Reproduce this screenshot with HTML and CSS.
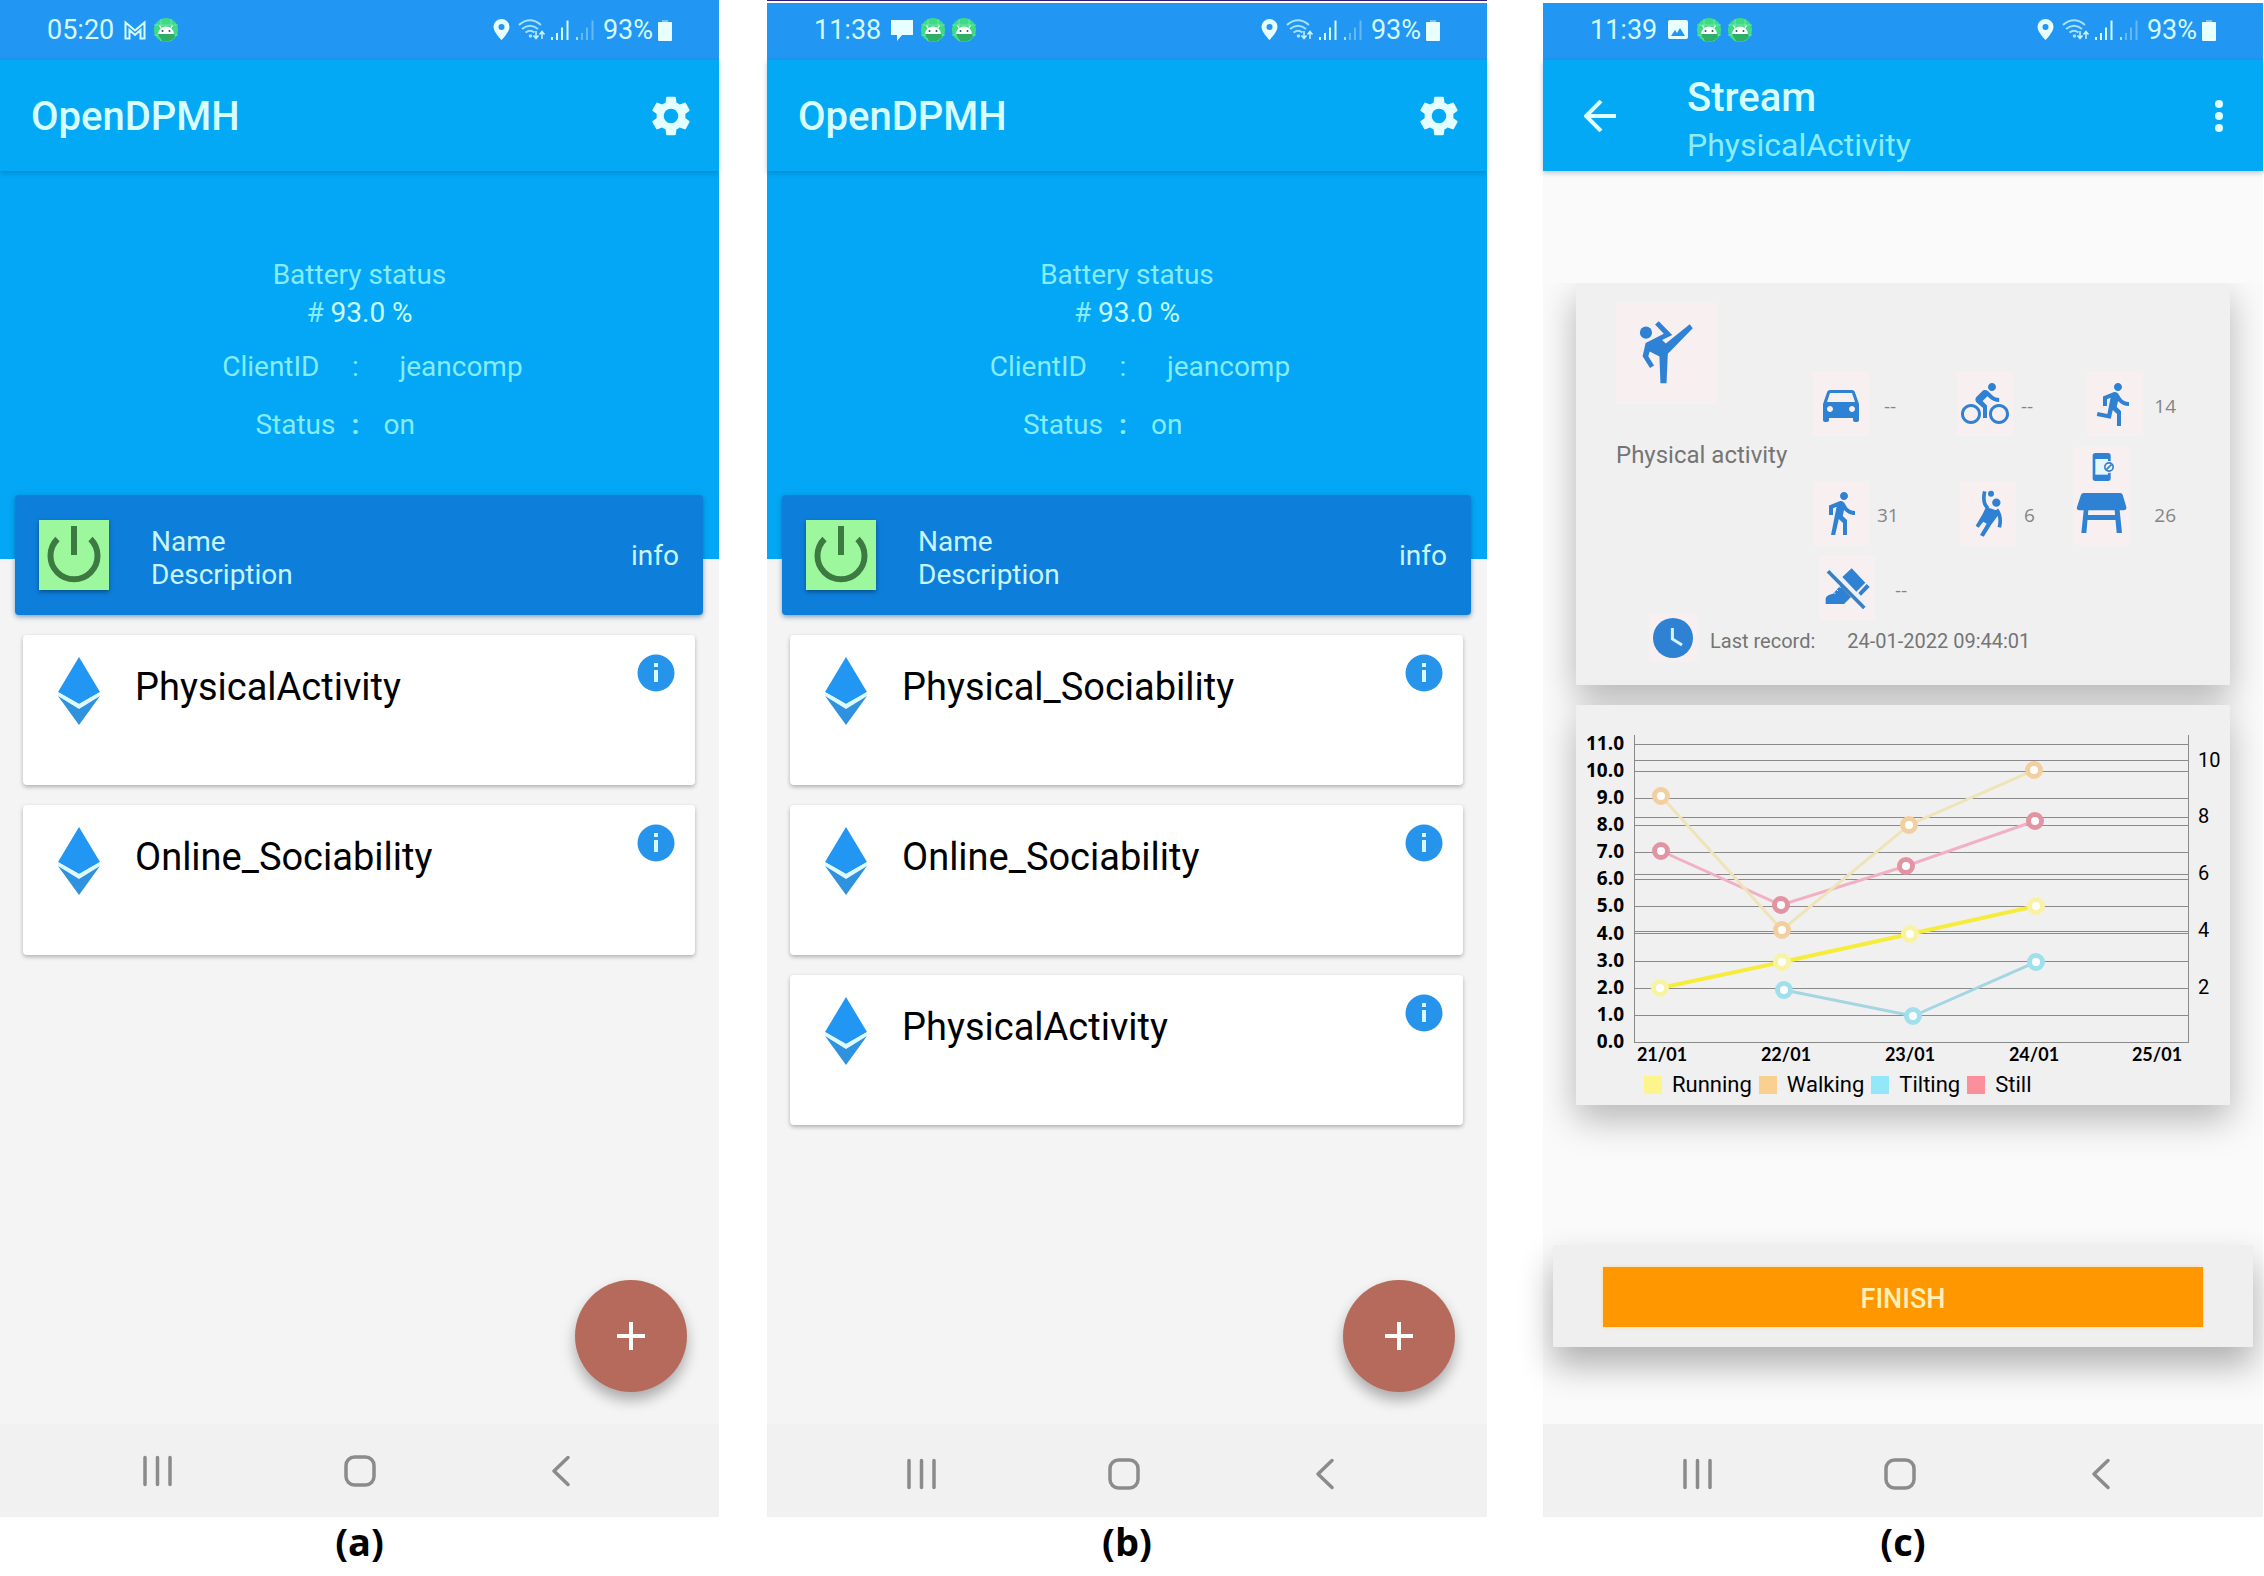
FILE: index.html
```html
<!DOCTYPE html>
<html lang="en">
<head>
<meta charset="utf-8">
<title>OpenDPMH</title>
<link rel="stylesheet" href="styles.css">
</head>
<body>
<svg class="sprite" aria-hidden="true">
  <symbol id="i-android" viewBox="0 0 24 24">
    <circle cx="12" cy="12" r="12" fill="#3ddc84"/>
    <path d="M0 7h24M0 17h24M7 1v22M17 1v22" stroke="#8aeab5" stroke-width=".7"/>
    <path d="M4 16l4 7q8 2 13-4l-1-4z" fill="#2fae68"/>
    <path d="M4 16a8 7.500 0 0 1 16 0z" fill="#fff"/>
    <path d="M7 10L5.500 7.500M17 10l1.500-2.500" stroke="#fff" stroke-width="1.200"/>
    <circle cx="8.500" cy="13" r="1" fill="#2a5a44"/><circle cx="15.500" cy="13" r="1" fill="#2a5a44"/>
  </symbol>
  <symbol id="i-signals" viewBox="0 0 102 22">
    <path fill="#e8ffff" fill-rule="evenodd" d="M8.500 0A8 8 0 0 0 .5 8c0 5 8 13 8 13s8-8 8-13a8 8 0 0 0-8-8zm0 5a3 3 0 1 1 0 6 3 3 0 0 1 0-6z"/>
    <g fill="none" stroke="#a8e2fa" stroke-width="2">
      <path d="M26 6q11-9.500 22 0M29 10q8-6.500 16 0M32.500 13.500q4.500-3.500 9 0"/>
      <path d="M43 12v7M40.500 16.500l2.500 3 2.500-3M49 20v-7M46.500 15.500l2.500-3 2.500 3" stroke="#c8f4ff" stroke-width="1.500"/>
    </g>
    <circle cx="37.500" cy="17" r="1.800" fill="#a8e2fa"/>
    <path d="M59 18v3M64 14v7M69 8.500V21M74.500 1.500V21" stroke="#d5ffff" stroke-width="2" fill="none"/>
    <path d="M84 18v3" stroke="#a8e2fa" stroke-width="2"/>
    <path d="M89 14v7M94 8.500V21M99.500 1.500V21" stroke="#65b9f7" stroke-width="2" fill="none"/>
  </symbol>
  <symbol id="i-battery" viewBox="0 0 14 21">
    <path d="M4 0h6v3H4z" fill="#7cc4f5"/><rect y="2" width="14" height="19" rx="1" fill="#e8ffff"/>
  </symbol>
  <symbol id="i-gear" viewBox="0 0 24 24"><path d="M19.140 12.940c.04-.3.06-.61.06-.94 0-.32-.02-.64-.07-.94l2.030-1.580c.18-.14.23-.41.12-.61l-1.920-3.320c-.12-.22-.37-.29-.59-.22l-2.390.96c-.5-.38-1.030-.7-1.620-.94l-.36-2.540c-.04-.24-.24-.41-.48-.41h-3.840c-.24 0-.43.17-.47.41l-.36 2.540c-.59.24-1.130.57-1.620.94l-2.390-.96c-.22-.08-.47 0-.59.22L2.740 8.870c-.12.21-.08.47.12.61l2.030 1.580c-.05.3-.09.63-.09.94s.02.64.07.94l-2.030 1.580c-.18.14-.23.41-.12.61l1.920 3.320c.12.22.37.29.59.22l2.390-.96c.5.38 1.030.7 1.620.94l.36 2.540c.05.24.24.41.48.41h3.840c.24 0 .44-.17.47-.41l.36-2.540c.59-.24 1.130-.56 1.620-.94l2.390.96c.22.08.47 0 .59-.22l1.920-3.320c.12-.22.07-.47-.12-.61l-2.010-1.580zM12 15.600c-1.980 0-3.600-1.620-3.600-3.600s1.620-3.600 3.600-3.600 3.600 1.620 3.600 3.600-1.620 3.600-3.600 3.600z"/></symbol>
  <symbol id="i-power" viewBox="0 0 70 70">
    <path d="M35 6v29M18.500 19a23.500 23.500 0 1 0 33 0" fill="none" stroke="#3c7a42" stroke-width="6"/>
  </symbol>
  <symbol id="i-stream" viewBox="0 0 42 68">
    <path d="M21 0l21 35-21 12L0 35z" fill="#2196f3"/>
    <path d="M0 35l21 12 21-12v4L21 52 0 39z" fill="#dcfaff"/>
    <path d="M0 39l21 13 21-13-21 29z" fill="#2f92de"/>
  </symbol>
  <symbol id="i-info" viewBox="0 0 38 38">
    <circle cx="19" cy="19" r="18.500" fill="#2694ea"/>
    <path d="M17 9h4v4h-4zM17 16h4v12h-4z" fill="#d5fbff"/>
  </symbol>
  <symbol id="i-recents" viewBox="0 0 32 32"><path d="M3 2.500v27M15.500 2.500v27M28 2.500v27" fill="none" stroke="#8b8b8b" stroke-width="3.500" stroke-linecap="round"/></symbol>
  <symbol id="i-home" viewBox="0 0 32 32"><rect x="2" y="2" width="28" height="28" rx="8.500" fill="none" stroke="#8b8b8b" stroke-width="3.500"/></symbol>
  <symbol id="i-back" viewBox="0 0 32 32"><path d="M23 2.500L9 16l14 13.500" fill="none" stroke="#8b8b8b" stroke-width="3.500" stroke-linecap="round" stroke-linejoin="round"/></symbol>
</svg>

<main class="board">
  <figure class="shot">
    <section class="phone" aria-label="Streams, two entries">
      <div class="status">
        <div class="status-side"><span class="clock">05:20</span>
          <svg class="note" viewBox="0 0 24 24"><path d="M2.500 20.500v-16l9.500 8 9.500-8v16h-4v-8.500L12 17l-5.500-5v8.500z" fill="none" stroke="#d5ffff" stroke-width="2"/></svg>
          <svg class="note"><use href="#i-android"/></svg></div>
        <div class="status-side right"><svg class="signals"><use href="#i-signals"/></svg><span class="clock">93%</span><svg class="battery"><use href="#i-battery"/></svg></div>
      </div>
      <header class="appbar"><h1>OpenDPMH</h1><button class="icon-btn" aria-label="Settings"><svg class="gear"><use href="#i-gear"/></svg></button></header>
      <div class="hero">
        <p>Battery status</p>
        <p># <b>93.0 %</b></p>
        <div class="pair"><span>ClientID</span><i>:</i><span>jeancomp</span></div>
        <div class="pair narrow"><span>Status</span><i class="strong">:</i><span>on</span></div>
      </div>
      <div class="head-card">
        <button class="power" aria-label="Power"><svg><use href="#i-power"/></svg></button>
        <div class="head-text"><span>Name</span><span>Description</span></div>
        <span class="head-info">info</span>
      </div>
      <ul class="streams">
        <li><svg class="stream"><use href="#i-stream"/></svg><span>PhysicalActivity</span><button class="icon-btn" aria-label="Info"><svg class="info"><use href="#i-info"/></svg></button></li>
        <li><svg class="stream"><use href="#i-stream"/></svg><span>Online_Sociability</span><button class="icon-btn" aria-label="Info"><svg class="info"><use href="#i-info"/></svg></button></li>
      </ul>
      <button class="fab" aria-label="Add"><svg viewBox="0 0 28 28"><path d="M14 0v28M0 14h28" stroke="#fff" stroke-width="4"/></svg></button>
      <nav class="navbar"><button class="icon-btn" aria-label="Recents"><svg><use href="#i-recents"/></svg></button><button class="icon-btn" aria-label="Home"><svg><use href="#i-home"/></svg></button><button class="icon-btn" aria-label="Back"><svg><use href="#i-back"/></svg></button></nav>
    </section>
    <figcaption>(a)</figcaption>
  </figure>

  <figure class="shot inset lined">
    <section class="phone" aria-label="Streams, three entries">
      <div class="status">
        <div class="status-side"><span class="clock">11:38</span>
          <svg class="note" viewBox="0 0 24 24"><path d="M1 2h22v15H12l-5 6v-6H1z" fill="#e8ffff"/></svg>
          <svg class="note"><use href="#i-android"/></svg><svg class="note"><use href="#i-android"/></svg></div>
        <div class="status-side right"><svg class="signals"><use href="#i-signals"/></svg><span class="clock">93%</span><svg class="battery"><use href="#i-battery"/></svg></div>
      </div>
      <header class="appbar"><h1>OpenDPMH</h1><button class="icon-btn" aria-label="Settings"><svg class="gear"><use href="#i-gear"/></svg></button></header>
      <div class="hero">
        <p>Battery status</p>
        <p># <b>93.0 %</b></p>
        <div class="pair"><span>ClientID</span><i>:</i><span>jeancomp</span></div>
        <div class="pair narrow"><span>Status</span><i class="strong">:</i><span>on</span></div>
      </div>
      <div class="head-card">
        <button class="power" aria-label="Power"><svg><use href="#i-power"/></svg></button>
        <div class="head-text"><span>Name</span><span>Description</span></div>
        <span class="head-info">info</span>
      </div>
      <ul class="streams">
        <li><svg class="stream"><use href="#i-stream"/></svg><span>Physical_Sociability</span><button class="icon-btn" aria-label="Info"><svg class="info"><use href="#i-info"/></svg></button></li>
        <li><svg class="stream"><use href="#i-stream"/></svg><span>Online_Sociability</span><button class="icon-btn" aria-label="Info"><svg class="info"><use href="#i-info"/></svg></button></li>
        <li><svg class="stream"><use href="#i-stream"/></svg><span>PhysicalActivity</span><button class="icon-btn" aria-label="Info"><svg class="info"><use href="#i-info"/></svg></button></li>
      </ul>
      <button class="fab" aria-label="Add"><svg viewBox="0 0 28 28"><path d="M14 0v28M0 14h28" stroke="#fff" stroke-width="4"/></svg></button>
      <nav class="navbar"><button class="icon-btn" aria-label="Recents"><svg><use href="#i-recents"/></svg></button><button class="icon-btn" aria-label="Home"><svg><use href="#i-home"/></svg></button><button class="icon-btn" aria-label="Back"><svg><use href="#i-back"/></svg></button></nav>
    </section>
    <figcaption>(b)</figcaption>
  </figure>

  <figure class="shot inset">
    <section class="phone detail" aria-label="Stream detail">
      <div class="status">
        <div class="status-side"><span class="clock">11:39</span>
          <svg class="note" viewBox="0 0 24 24"><path fill="#e8ffff" fill-rule="evenodd" d="M4 2h16a2 2 0 0 1 2 2v15a2 2 0 0 1-2 2H4a2 2 0 0 1-2-2V4a2 2 0 0 1 2-2zm1 16h14l-5-8-3 5-2-3z"/></svg>
          <svg class="note"><use href="#i-android"/></svg><svg class="note"><use href="#i-android"/></svg></div>
        <div class="status-side right"><svg class="signals"><use href="#i-signals"/></svg><span class="clock">93%</span><svg class="battery"><use href="#i-battery"/></svg></div>
      </div>
      <header class="appbar">
        <button class="icon-btn" aria-label="Go back"><svg class="arrow" viewBox="0 0 32 32"><path d="M32 16H3M17 1L2 16l15 15" fill="none" stroke="#e0ffff" stroke-width="4"/></svg></button>
        <div class="titles"><h1>Stream</h1><span>PhysicalActivity</span></div>
        <button class="icon-btn" aria-label="More"><svg class="dots" viewBox="0 0 10 34" fill="#e0ffff"><circle cx="5" cy="5" r="4"/><circle cx="5" cy="17" r="4"/><circle cx="5" cy="29" r="4"/></svg></button>
      </header>
      <div class="cards">
        <article class="card activity">
          <div class="overview">
            <div class="kind">
              <svg class="kick tint" viewBox="18 24 300 300"><circle cx="107" cy="112" r="18"/><path d="M134 88l11-10 40 41-30 15 11 10 71-57 9 12-74 76-4 87h-18l-3-79-29-15-4 14 17 28-12 7-22-35 9-39 54-28z"/></svg>
              <span>Physical activity</span>
            </div>
            <div class="metrics">
              <div class="metric wide"><svg class="tint" viewBox="-2 -4 28 32"><path d="M18.920 6.010C18.720 5.420 18.160 5 17.500 5h-11c-.66 0-1.210.42-1.420 1.010L3 12v8c0 .55.45 1 1 1h1c.55 0 1-.45 1-1v-1h12v1c0 .55.45 1 1 1h1c.55 0 1-.45 1-1v-8l-2.080-5.990zM6.500 16c-.83 0-1.500-.67-1.500-1.500S5.670 13 6.500 13s1.500.67 1.500 1.500S7.330 16 6.500 16zm11 0c-.83 0-1.500-.67-1.500-1.500s.67-1.500 1.500-1.500 1.500.67 1.500 1.500-.67 1.500-1.500 1.500zM5 11l1.500-4.500h11L19 11H5z"/></svg><span>--</span></div>
              <div class="metric"><svg class="tint" viewBox="-2 -4 28 32"><path d="M15.500 5.500c1.100 0 2-.9 2-2s-.9-2-2-2-2 .9-2 2 .9 2 2 2zM5 12c-2.800 0-5 2.200-5 5s2.200 5 5 5 5-2.200 5-5-2.200-5-5-5zm0 8.500c-1.900 0-3.500-1.600-3.500-3.500s1.600-3.500 3.500-3.500 3.500 1.600 3.500 3.500-1.600 3.500-3.500 3.500zm5.800-10l2.400-2.400.8.8c1.300 1.300 3 2.100 5.100 2.100V9c-1.500 0-2.700-.6-3.600-1.500l-1.900-1.900c-.5-.4-1-.6-1.600-.6s-1.100.2-1.400.6L7.800 8.400c-.4.4-.6.9-.6 1.400 0 .6.2 1.100.6 1.400L11 14v5h2v-6.200l-2.200-2.300zM19 12c-2.800 0-5 2.200-5 5s2.200 5 5 5 5-2.200 5-5-2.200-5-5-5zm0 8.500c-1.900 0-3.500-1.600-3.500-3.500s1.600-3.500 3.500-3.500 3.500 1.600 3.500 3.500-1.600 3.500-3.500 3.500z"/></svg><span>--</span></div>
              <div class="metric end"><svg class="tint" viewBox="-2 -4 28 32"><path d="M13.490 5.480c1.100 0 2-.9 2-2s-.9-2-2-2-2 .9-2 2 .9 2 2 2zm-3.600 13.900l1-4.400 2.100 2v6h2v-7.500l-2.100-2 .6-3c1.300 1.500 3.300 2.500 5.500 2.500v-2c-1.900 0-3.500-1-4.300-2.400l-1-1.600c-.4-.6-1-1-1.700-1-.3 0-.5.1-.8.1l-5.200 2.200v4.700h2v-3.400l1.800-.7-1.600 8.100-4.900-1-.4 2 7 1.400z"/></svg><span>14</span></div>
              <div class="metric"><svg class="tint" viewBox="-2 -4 28 32"><path d="M13.500 5.500c1.100 0 2-.9 2-2s-.9-2-2-2-2 .9-2 2 .9 2 2 2zM9.800 8.900L7 23h2.100l1.800-8 2.100 2v6h2v-7.500l-2.100-2 .6-3C14.800 12 16.800 13 19 13v-2c-1.900 0-3.500-1-4.300-2.400l-1-1.600c-.4-.6-1-1-1.700-1-.3 0-.5.1-.8.1L6 8.300V13h2V9.600l1.800-.7z"/></svg><span>31</span></div>
              <div class="metric tilt"><svg class="tint" viewBox="452 126 168 192"><circle cx="545" cy="164" r="9"/><circle cx="561" cy="191" r="12.500"/><path d="M530 204l35 11 2 13-22 30-22 35-11-5 20-34-10-6-14 18-9-6 21-35z"/><path d="M526 157q-8 36 10 51M562 212q16 22 8 53" fill="none" stroke="#2f81d4" stroke-width="11"/></svg><span>6</span></div>
              <div class="metric end far"><svg class="tint tall" viewBox="790 24 168 294"><rect x="849" y="42" width="54" height="84" rx="8"/><path d="M857 60h38v47h-38z" fill="#e4f6ff"/><circle cx="898" cy="84" r="18" fill="#f8eff0"/><g fill="none" stroke="#2f81d4" stroke-width="5"><circle cx="898" cy="84" r="12.500"/><path d="M890 92l16-16"/></g><path d="M822 162h110q5 0 7 5l11 37q1 10-8 10H809q-9 0-7-10l12-37q2-5 8-5zM822 214h14l-6 68h-15zM915 214h15l7 68h-16zM832 228h87v15h-87z"/></svg><span>26</span></div>
              <div class="metric indent"><svg class="tint" viewBox="28 347 168 192"><path d="M126 384l41 43-27 27-42-44zM171 431l9 9-26 26-8-8zM48 491v-17q3-11 22-14l22-24 32 34-21 21z"/><path d="M68 452l9 9M76 443l9 9M84 434l9 9" stroke="#dff4ff" stroke-width="3"/><path d="M52 384l118 118" stroke="#e8f4fc" stroke-width="17"/><path d="M55 393l109 110" stroke="#3b7fc0" stroke-width="11"/></svg><span>--</span></div>
            </div>
          </div>
          <div class="record">
            <svg class="tint" viewBox="0 0 24 24"><circle cx="12" cy="12" r="10"/><path d="M11.700 7v5.500l4.800 3" fill="none" stroke="#d5f5ff" stroke-width="1.500"/></svg>
            <span>Last record:</span><time datetime="2022-01-24T09:44:01">24-01-2022 09:44:01</time>
          </div>
        </article>
        <article class="card">
          <svg class="plot" viewBox="0 0 654 360" role="img" aria-label="Activity per day">
            <path class="axis" d="M58 30v307h554V30M58 39h554M58 66h554M58 93h554M58 120h554M58 147h554M58 174h554M58 201h554M58 228h554M58 256h554M58 283h554M58 310h554M58 55h554M58 112h554M58 169h554M58 226h554"/>
            <g class="left-ticks">
              <text x="48" y="45">11.0</text><text x="48" y="72">10.0</text><text x="48" y="99">9.0</text><text x="48" y="126">8.0</text><text x="48" y="153">7.0</text><text x="48" y="180">6.0</text><text x="48" y="207">5.0</text><text x="48" y="235">4.0</text><text x="48" y="262">3.0</text><text x="48" y="289">2.0</text><text x="48" y="316">1.0</text><text x="48" y="343">0.0</text>
            </g>
            <g class="right-ticks">
              <text x="622" y="62">10</text><text x="622" y="118">8</text><text x="622" y="175">6</text><text x="622" y="232">4</text><text x="622" y="289">2</text>
            </g>
            <g class="days">
              <text x="86" y="356">21/01</text><text x="210" y="356">22/01</text><text x="334" y="356">23/01</text><text x="458" y="356">24/01</text><text x="581" y="356">25/01</text>
            </g>
            <g fill="none">
              <path d="M85 146l120 54 125-39 129-45" stroke="#f2b0c4" stroke-width="3"/>
              <path d="M85 91l121 134 127-105 125-55" stroke="#efe3b8" stroke-width="3"/>
              <path d="M84 283l122-26 128-28 126-28" stroke="#f6ec3c" stroke-width="4"/>
              <path d="M208 285l129 26 123-54" stroke="#a3d5e2" stroke-width="3"/>
            </g>
            <g fill="#fff" stroke-width="5">
              <g stroke="#e294a3"><circle cx="85" cy="146" r="6.500"/><circle cx="205" cy="200" r="6.500"/><circle cx="330" cy="161" r="6.500"/><circle cx="459" cy="116" r="6.500"/></g>
              <g stroke="#f2cf9e"><circle cx="85" cy="91" r="6.500"/><circle cx="206" cy="225" r="6.500"/><circle cx="333" cy="120" r="6.500"/><circle cx="458" cy="65" r="6.500"/></g>
              <g stroke="#f8f3a4"><circle cx="84" cy="283" r="6.500"/><circle cx="206" cy="257" r="6.500"/><circle cx="334" cy="229" r="6.500"/><circle cx="460" cy="201" r="6.500"/></g>
              <g stroke="#9fe0ec"><circle cx="208" cy="285" r="6.500"/><circle cx="337" cy="311" r="6.500"/><circle cx="460" cy="257" r="6.500"/></g>
            </g>
          </svg>
          <ul class="legend"><li class="running">Running</li><li class="walking">Walking</li><li class="tilting">Tilting</li><li class="still">Still</li></ul>
        </article>
      </div>
      <div class="finish"><button>FINISH</button></div>
      <nav class="navbar"><button class="icon-btn" aria-label="Recents"><svg><use href="#i-recents"/></svg></button><button class="icon-btn" aria-label="Home"><svg><use href="#i-home"/></svg></button><button class="icon-btn" aria-label="Back"><svg><use href="#i-back"/></svg></button></nav>
    </section>
    <figcaption>(c)</figcaption>
  </figure>
</main>
</body>
</html>
```
FILE: styles.css
```css
* { box-sizing: border-box; }
body { margin: 0; background: #fff; font-family: Roboto, "Liberation Sans", sans-serif; }
h1, p, ul, figure { margin: 0; padding: 0; }
ul { list-style: none; }
button { border: 0; padding: 0; margin: 0; background: none; font: inherit; color: inherit; cursor: pointer; }
svg { display: block; flex: none; }
.sprite { position: absolute; width: 0; height: 0; }

/* Board of three phones */
.board { display: grid; grid-template-columns: 719fr 48px 720fr 56px 720fr; min-height: 100vh; padding-right: 1px; }
.shot:nth-child(1) { grid-column: 1; }
.shot:nth-child(2) { grid-column: 3; }
.shot:nth-child(3) { grid-column: 5; }
.shot { display: flex; flex-direction: column; min-width: 0; }
.inset { padding-top: 3px; }
.lined { padding-top: 2px; border-top: 1px solid #2b1d78; }
figcaption { height: 59px; font: 700 38px/48px "Open Sans", sans-serif; text-align: center; color: #000; }
.phone { position: relative; flex: 1; display: flex; flex-direction: column; background: #f4f4f4; }
.detail { background: #fafafa; }

/* System bars */
.status { display: flex; justify-content: space-between; align-items: flex-end; height: 60px; padding: 0 47px 14px; background: #2196f3; color: #d5fbff; }
.inset .status { height: 57px; }
.status-side { display: flex; align-items: center; height: 32px; gap: 7px; }
.right { gap: 5px; }
.clock { font-size: 27px; line-height: 32px; margin-right: 2px; }
.right .clock { margin: 0; padding-left: 3px; }
.note { width: 24px; height: 24px; }
.signals { width: 102px; height: 22px; }
.battery { width: 14px; height: 21px; }
.navbar { display: flex; justify-content: space-between; align-items: center; height: 93px; margin-top: auto; padding: 0 142px; background: #f1f1f1; position: relative; }
.inset .navbar { padding: 6px 146px 0 139px; }
.navbar svg { width: 32px; height: 32px; }
.icon-btn { display: flex; align-items: center; justify-content: center; }

/* App bar */
.appbar { display: flex; align-items: center; justify-content: space-between; height: 111px; padding: 0 24px 0 31px; background: #03a9f5; color: #d8ffff; box-shadow: 0 2px 5px rgba(0, 50, 90, .25); position: relative; }
h1 { font-size: 40px; line-height: 48px; padding-top: 2px; font-weight: 500; }
.gear { width: 48px; height: 48px; fill: #e4ffff; }
.detail .appbar { padding: 0 39px 0 41px; justify-content: flex-start; }
.arrow { width: 32px; height: 32px; }
.titles { display: flex; flex-direction: column; flex: 1; margin-left: 71px; padding-top: 8px; font-size: 32px; line-height: 46px; color: #8cecfb; }
.titles h1 { color: #d8ffff; }
.dots { width: 10px; height: 34px; }

/* Summary */
.hero { height: 388px; padding-top: 85px; background: #03a7f5; color: #86ecfa; font-size: 28px; line-height: 38px; text-align: center; }
.hero b { font-weight: 400; color: #c8ffff; }
.pair { display: grid; grid-template-columns: 1fr 80px 1fr; margin-top: 16px; }
.pair i { font-style: normal; padding-right: 8px; }
.pair .strong { font-weight: 700; }
.pair span:first-child { text-align: right; }
.pair span:last-child { text-align: left; }
.narrow { grid-template-columns: 1fr 48px 1fr; margin-top: 20px; }

.head-card { display: flex; align-items: center; height: 120px; margin: -64px 16px 0 15px; padding: 0 24px; border-radius: 4px; background: #0d7eda; color: #c8f6ff; font-size: 28px; line-height: 33px; box-shadow: 0 2px 5px rgba(0, 60, 120, .45); }
.power { width: 70px; height: 70px; background: #9cf79d; box-shadow: 0 2px 4px rgba(0, 40, 60, .5); }
.power svg { width: 70px; height: 70px; }
.head-text { display: flex; flex-direction: column; flex: 1; margin-left: 42px; padding-top: 5px; }

/* Streams */
.streams { display: flex; flex-direction: column; gap: 20px; padding: 20px 24px 20px 23px; }
.streams li { display: flex; align-items: flex-start; height: 150px; padding: 19px 20px 0 35px; border-radius: 4px; background: #fff; box-shadow: 0 2px 4px rgba(0, 0, 0, .28); font-size: 38px; line-height: 66px; color: #000; }
.streams span { flex: 1; margin-left: 35px; }
.stream { width: 42px; height: 68px; margin-top: 3px; }
.info { width: 38px; height: 38px; }
.fab { position: absolute; right: 32px; bottom: 125px; display: flex; align-items: center; justify-content: center; width: 112px; height: 112px; border-radius: 50%; background: #b66a5b; box-shadow: 0 8px 14px rgba(0, 0, 0, .3); }
.fab svg { width: 28px; height: 28px; }

/* Detail cards */
.cards { display: flex; flex-direction: column; gap: 20px; margin-top: 112px; padding: 0 33px 80px; overflow: hidden; }
.card { height: 400px; background: #f0f0f0; box-shadow: 0 14px 34px rgba(0, 0, 0, .28); }
.activity { height: 402px; padding: 20px 40px; color: #757575; }
.overview { display: flex; }
.kind { width: 197px; font-size: 24px; line-height: 32px; }
.kick { width: 101px; height: 101px; margin-bottom: 35px; }
.tint { fill: #2f81d4; background: #f8eff0; }
.metrics { display: grid; grid-template-columns: 144px 118px 101px; grid-template-rows: 64px 98px 64px; row-gap: 11px; align-items: end; margin-top: 69px; font: 19px/24px "Open Sans", sans-serif; color: #858585; }
.metric { display: flex; align-items: flex-end; gap: 8px; }
.metric svg { width: 56px; height: 64px; }
.metric .tall { height: 98px; }
.metric span { margin-bottom: 18px; }
.wide { gap: 15px; }
.tilt { padding-left: 3px; }
.end { justify-content: flex-end; gap: 11px; }
.far { gap: 25px; }
.indent { gap: 20px; padding-left: 6px; }
.record { display: flex; align-items: center; gap: 13px; margin: -6px 0 0 33px; font-size: 20px; line-height: 24px; }
.record svg { width: 48px; height: 48px; }
.record span, .record time { padding-top: 6px; }
.record time { margin-left: 19px; }

/* Chart */
.plot { width: 100%; height: auto; }
.axis { fill: none; stroke: #8a8a8a; stroke-width: 1; shape-rendering: crispEdges; }
.left-ticks { font: 700 19px "Open Sans", sans-serif; text-anchor: end; }
.right-ticks { font-size: 20px; }
.days { font: 700 18px Lato, "Open Sans", sans-serif; text-anchor: middle; }
.legend { display: flex; gap: 7px; padding: 7px 0 0 68px; font-size: 22px; line-height: 26px; color: #000; }
.legend li { display: flex; align-items: center; gap: 10px; }
.legend li::before { content: ""; width: 18px; height: 18px; background: #fbf58c; }
.legend .walking::before { background: #fad091; }
.legend .tilting::before { background: #92e7f8; }
.legend .still::before { background: #fb8f9b; }

.finish { margin: 60px 10px 0; padding: 22px 50px 20px; background: #efefef; box-shadow: 0 18px 34px rgba(0, 0, 0, .3); }
.finish button { display: block; width: 100%; height: 60px; padding-top: 3px; background: #ff9800; color: #fff0b8; font-size: 27px; font-weight: 500; box-shadow: 0 0 3px #ffd890; }
```
